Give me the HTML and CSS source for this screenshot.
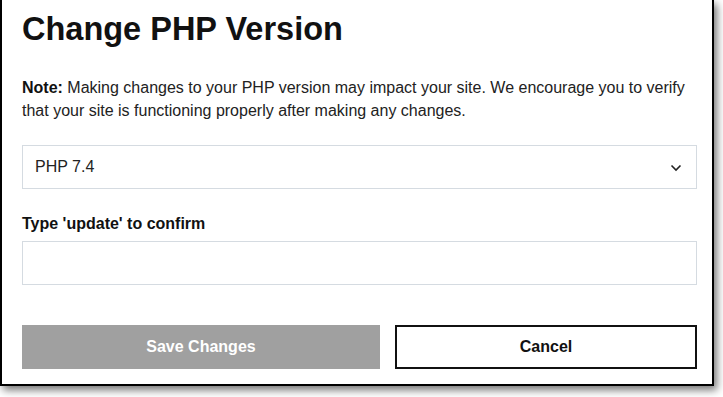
FILE: index.html
```html
<!DOCTYPE html>
<html lang="en">
  <head>
    <meta charset="UTF-8" />
    <meta name="viewport" content="width=device-width, initial-scale=1.0" />
    <title>Change PHP Version</title>
    <link rel="stylesheet" href="styles.css">
  </head>
  <body>
    <div id="dialog">
      <h1>Change PHP Version</h1>
      <p class="note"><strong>Note:</strong> Making changes to your PHP version may impact your site. We encourage you to verify that your site is functioning properly after making any changes.</p>
      <div class="select">
        <span>PHP 7.4</span>
        <svg width="12" height="8" viewBox="0 0 12 8"><path d="M1.5 1.5 L6 6 L10.5 1.5" fill="none" stroke="#222" stroke-width="1.6"/></svg>
      </div>
      <label for="confirm">Type 'update' to confirm</label>
      <input id="confirm" type="text" />
      <div class="actions">
        <button class="save">Save Changes</button>
        <button class="cancel">Cancel</button>
      </div>
    </div>
  </body>
</html>
```

FILE: styles.css
```css
* {
  margin: 0;
  padding: 0;
  box-sizing: border-box;
  font-family: "Liberation Sans", Arial, sans-serif;
}
body {
  background-color: #fff;
  width: 723px;
  height: 397px;
  overflow: hidden;
}
#dialog {
  width: 714px;
  height: 386px;
  background: #fff;
  border: 2px solid #000;
  border-top: none;
  box-shadow: 3px 4px 8px rgba(0, 0, 0, 0.55);
  padding: 9px 15px 0 20px;
  color: #111;
}
#dialog h1 {
  font-size: 32.5px;
  font-weight: bold;
  line-height: 40px;
  color: #111;
}
.note {
  margin-top: 27px;
  font-size: 16px;
  line-height: 23px;
  color: #222;
}
.note strong {
  color: #111;
}
.select {
  margin-top: 23px;
  height: 44px;
  border: 1px solid #d5dbe1;
  display: flex;
  align-items: center;
  justify-content: space-between;
  padding: 0 14px 0 12px;
  font-size: 16px;
  color: #222;
}
.select svg {
  margin-top: 1px;
}
label {
  display: block;
  margin-top: 23px;
  font-size: 16px;
  font-weight: bold;
  line-height: 24px;
  color: #111;
}
input {
  display: block;
  width: 100%;
  height: 44px;
  margin-top: 5px;
  border: 1px solid #d5dbe1;
  outline: none;
}
.actions {
  display: flex;
  gap: 15px;
  margin-top: 40px;
}
.actions button {
  height: 44px;
  font-size: 16px;
  font-weight: bold;
  border: none;
}
.save {
  width: 358px;
  background-color: #a0a0a0;
  color: #fff;
}
.cancel {
  flex: 1;
  background-color: #fff;
  color: #111;
  border: 2px solid #111 !important;
}
```
